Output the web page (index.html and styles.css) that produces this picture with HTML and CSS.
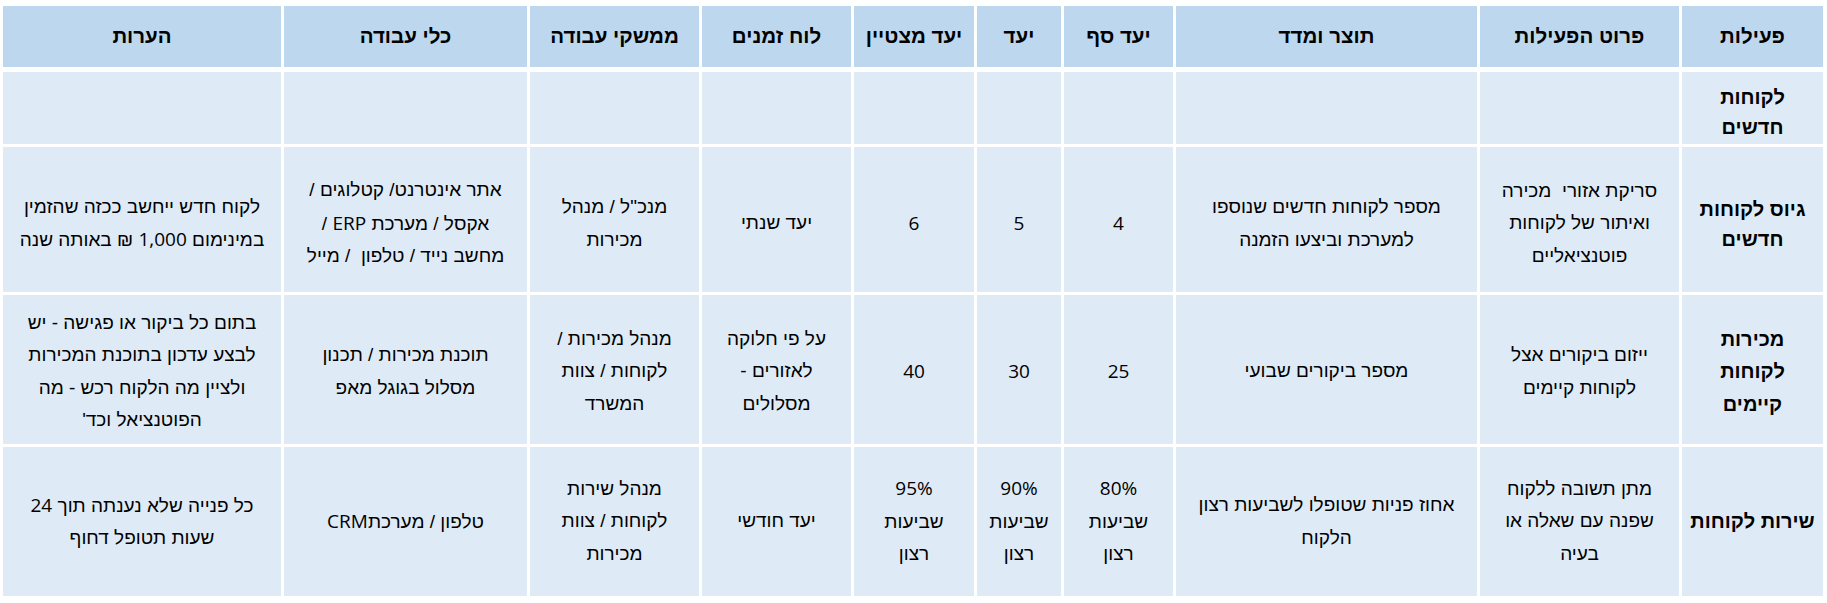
FILE: index.html
```html
<!DOCTYPE html>
<html lang="he" dir="rtl">
<head>
<meta charset="utf-8">
<title>טבלת יעדים</title>
<link rel="stylesheet" href="styles.css">
</head>
<body>
<div class="sheet">
  <div class="grid head">
    <div class="cell"><p>פעילות</p></div>
    <div class="cell"><p>פרוט הפעילות</p></div>
    <div class="cell"><p>תוצר ומדד</p></div>
    <div class="cell"><p>יעד סף</p></div>
    <div class="cell"><p>יעד</p></div>
    <div class="cell"><p>יעד מצטיין</p></div>
    <div class="cell"><p>לוח זמנים</p></div>
    <div class="cell"><p>ממשקי עבודה</p></div>
    <div class="cell"><p>כלי עבודה</p></div>
    <div class="cell"><p>הערות</p></div>
  </div>
  <div class="grid body">
    <!-- row 1 -->
    <div class="cell first tight"><p>לקוחות<br>חדשים</p></div>
    <div class="cell"></div>
    <div class="cell"></div>
    <div class="cell"></div>
    <div class="cell"></div>
    <div class="cell"></div>
    <div class="cell"></div>
    <div class="cell"></div>
    <div class="cell"></div>
    <div class="cell"></div>
    <!-- row 2 -->
    <div class="cell first tight"><p>גיוס לקוחות<br>חדשים</p></div>
    <div class="cell"><p>סריקת אזורי&nbsp; מכירה<br>ואיתור של לקוחות<br>פוטנציאליים</p></div>
    <div class="cell"><p>מספר לקוחות חדשים שנוספו<br>למערכת וביצעו הזמנה</p></div>
    <div class="cell"><p><span class="lat">4</span></p></div>
    <div class="cell"><p><span class="lat">5</span></p></div>
    <div class="cell"><p><span class="lat">6</span></p></div>
    <div class="cell"><p>יעד שנתי</p></div>
    <div class="cell"><p>מנכ"ל / מנהל<br>מכירות</p></div>
    <div class="cell"><p>אתר אינטרנט/ קטלוגים /<br>אקסל / מערכת <span class="lat">ERP</span> /<br>מחשב נייד / טלפון&nbsp; / מייל</p></div>
    <div class="cell"><p>לקוח חדש ייחשב ככזה שהזמין<br>במינימום <span class="lat">1,000</span> ₪ באותה שנה</p></div>
    <!-- row 3 -->
    <div class="cell first"><p>מכירות<br>לקוחות<br>קיימים</p></div>
    <div class="cell"><p>ייזום ביקורים אצל<br>לקוחות קיימים</p></div>
    <div class="cell"><p>מספר ביקורים שבועי</p></div>
    <div class="cell"><p><span class="lat">25</span></p></div>
    <div class="cell"><p><span class="lat">30</span></p></div>
    <div class="cell"><p><span class="lat">40</span></p></div>
    <div class="cell"><p>על פי חלוקה<br>לאזורים -<br>מסלולים</p></div>
    <div class="cell"><p>מנהל מכירות /<br>לקוחות / צוות<br>המשרד</p></div>
    <div class="cell"><p>תוכנת מכירות / תכנון<br>מסלול בגוגל מאפ</p></div>
    <div class="cell"><p>בתום כל ביקור או פגישה - יש<br>לבצע עדכון בתוכנת המכירות<br>ולציין מה הלקוח רכש - מה<br>הפוטנציאל וכד'</p></div>
    <!-- row 4 -->
    <div class="cell first"><p>שירות לקוחות</p></div>
    <div class="cell"><p>מתן תשובה ללקוח<br>שפנה עם שאלה או<br>בעיה</p></div>
    <div class="cell"><p>אחוז פניות שטופלו לשביעות רצון<br>הלקוח</p></div>
    <div class="cell"><p><span class="lat">80%</span><br>שביעות<br>רצון</p></div>
    <div class="cell"><p><span class="lat">90%</span><br>שביעות<br>רצון</p></div>
    <div class="cell"><p><span class="lat">95%</span><br>שביעות<br>רצון</p></div>
    <div class="cell"><p>יעד חודשי</p></div>
    <div class="cell"><p>מנהל שירות<br>לקוחות / צוות<br>מכירות</p></div>
    <div class="cell"><p>טלפון / מערכת<span class="lat">CRM</span></p></div>
    <div class="cell"><p>כל פנייה שלא נענתה תוך <span class="lat">24</span><br>שעות תטופל דחוף</p></div>
  </div>
</div>
</body>
</html>
```
FILE: styles.css
```css
html, body {
  margin: 0;
  padding: 0;
  background: #ffffff;
}

body {
  font-family: "Liberation Sans", Arial, sans-serif;
  font-size: 19px;
  color: #000000;
}

.sheet {
  padding: 6px 4px 0 3px;
}

.grid {
  display: grid;
  grid-template-columns: 141px 199px 301px 109px 84px 120px 149px 169px 243px 278px;
  column-gap: 3px;
  row-gap: 3px;
}

.head {
  grid-template-rows: 61px;
  margin-bottom: 5px;
}

.body {
  grid-template-rows: 72px 145px 149px 149px;
}

.cell {
  display: flex;
  align-items: center;
  justify-content: center;
  text-align: center;
  line-height: 32.5px;
  background: #deeaf6;
  padding: 0 2px;
}

.body .cell:nth-child(-n+20) {
  padding-top: 8px;
}

.body .cell:nth-child(n+21):nth-child(-n+30) {
  padding-top: 4px;
}

.cell p {
  margin: 0;
}

.head .cell {
  background: #bdd7ee;
  font-weight: bold;
  font-size: 20.5px;
}

.first {
  font-weight: bold;
  font-size: 20px;
}

.tight {
  line-height: 30px;
}

.lat {
  font-family: "Open Sans", "Liberation Sans", sans-serif;
}
```
